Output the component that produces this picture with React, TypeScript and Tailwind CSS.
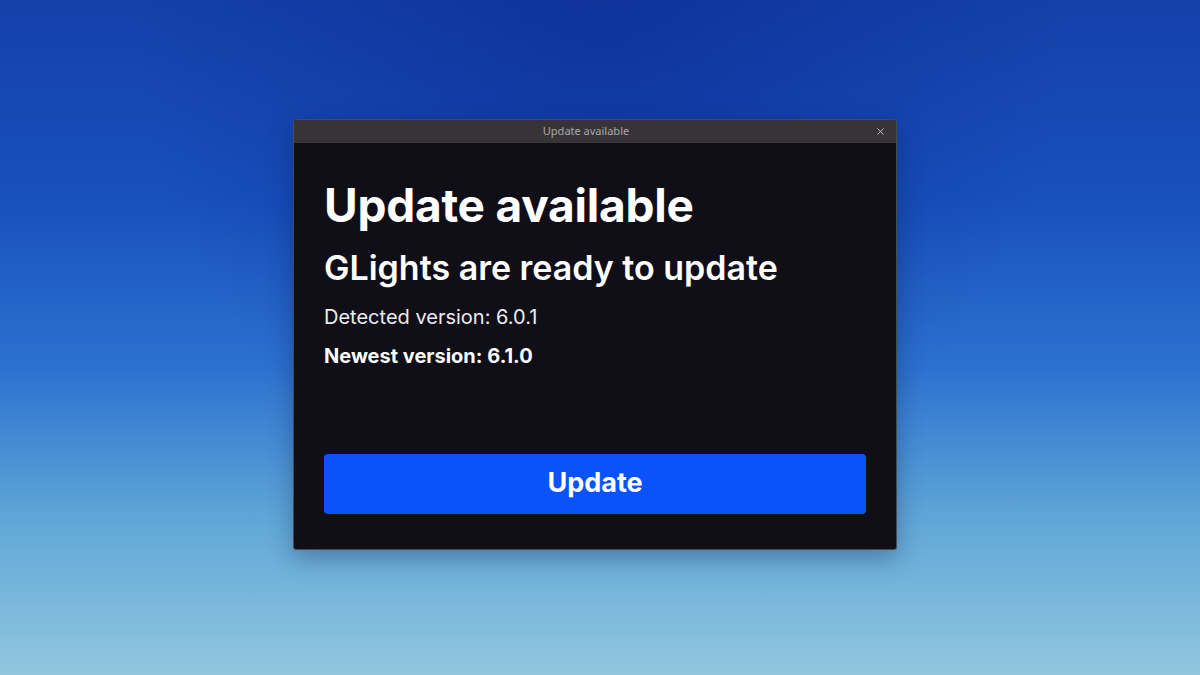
import { X } from "lucide-react";

export default function App() {
  return (
    <div
      className="w-[1200px] h-[675px] flex items-center justify-center pr-[10px] pb-[7px] bg-[linear-gradient(180deg,#1440aa_0%,#1850bd_30%,#2d72d0_55%,#62a9d8_78%,#92c6de_100%)] relative overflow-hidden"
      style={{ fontFamily: "Inter, 'Noto Sans', sans-serif" }}
    >
      <div className="absolute inset-0 bg-[radial-gradient(ellipse_at_50%_0%,rgba(10,40,140,0.55),transparent_55%)]" />
      <div className="relative w-[604px] h-[431px] flex flex-col bg-[#100e17] border border-[#4a4a4f] rounded-[3px] shadow-[0_8px_24px_rgba(10,30,70,0.35)] overflow-hidden">
        <div className="h-[23px] shrink-0 bg-[#363436] flex items-center justify-center pr-[18px] relative">
          <span className="text-[11px] text-[#a9a9ab]" style={{ fontFamily: "'Noto Sans', sans-serif" }}>
            Update available
          </span>
          <X className="absolute right-[10px] top-[6px] w-[11px] h-[11px] text-[#c8c8c8]" strokeWidth={2} />
        </div>
        <div className="flex-1 flex flex-col px-[30px] pt-[34px] pb-[35px] text-white">
          <h1 className="text-[46px] font-bold leading-[56px] tracking-[-0.005em]">Update available</h1>
          <h2 className="mt-[14px] text-[34px] font-semibold leading-[42px]">GLights are ready to update</h2>
          <p className="mt-[14px] text-[20px] leading-[28px] text-[#ececee]">Detected version: 6.0.1</p>
          <p className="mt-[11px] text-[20px] font-bold leading-[28px]">Newest version: 6.1.0</p>
          <button className="mt-auto h-[60px] w-full rounded-[4px] bg-[#0a52fa] text-[27px] font-bold text-white">
            Update
          </button>
        </div>
      </div>
    </div>
  );
}
